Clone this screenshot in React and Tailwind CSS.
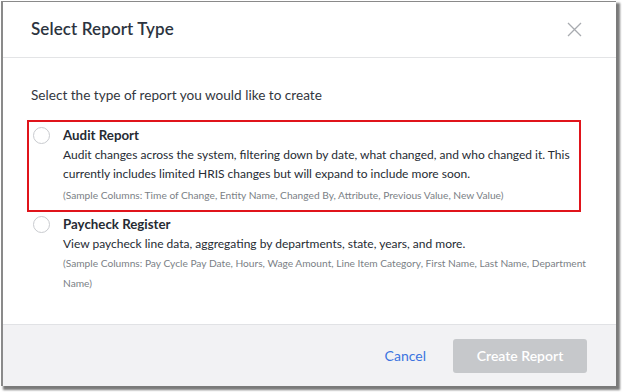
export default function App() {
  const font = { fontFamily: "Lato, 'Open Sans', sans-serif" };
  return (
    <div className="w-[622px] h-[392px] bg-white relative" style={font}>
      <div className="absolute left-[1px] top-[1px] w-[615px] h-[385px] border-l-2 border-t border-[#8a8a8a] shadow-[3px_3px_2px_1px_#7a7a7a] bg-white flex flex-col">
        {/* Header */}
        <div className="h-[56px] flex items-center justify-between pl-[28px] pr-[34px] border-b border-[#e3e4e6] shrink-0">
          <h1 className="text-[17px] font-semibold text-[#2c3440] tracking-[0.1px] -mt-[1px]">Select Report Type</h1>
          <svg width="15" height="15" viewBox="0 0 15 15" className="text-[#a8abb0]">
            <path d="M1 1 L14 14 M14 1 L1 14" stroke="currentColor" strokeWidth="1.3" fill="none" />
          </svg>
        </div>
        {/* Body */}
        <div className="flex-1 px-[24px] pt-[27px]">
          <p className="text-[13.6px] text-[#333740] leading-[20px] pl-[4px] mb-[15px]">
            Select the type of report you would like to create
          </p>
          <div className="border-2 border-[#e0141b] flex gap-[13px] pl-[4px] pr-[8px] pt-[4px] pb-[5px] w-[554px]">
            <div className="w-[17px] h-[17px] rounded-full border border-[#c9cbcf] bg-white shrink-0 mt-[1px]" />
            <div className="flex flex-col">
              <div className="text-[13.3px] font-bold text-[#262b33] leading-[19px]">Audit Report</div>
              <div className="text-[12px] text-[#262b33] leading-[19px]">
                Audit changes across the system, filtering down by date, what changed, and who changed it. This currently includes limited HRIS changes but will expand to include more soon.
              </div>
              <div className="text-[10.2px] text-[#7b7f86] leading-[20px] mt-[2px]">
                (Sample Columns: Time of Change, Entity Name, Changed By, Attribute, Previous Value, New Value)
              </div>
            </div>
          </div>
          <div className="border-2 border-transparent flex gap-[13px] pl-[4px] pt-[3px] pb-[4px] w-[566px] -mt-[2px]">
            <div className="w-[17px] h-[17px] rounded-full border border-[#c9cbcf] bg-white shrink-0 mt-[1px]" />
            <div className="flex flex-col">
              <div className="text-[13.3px] font-bold text-[#262b33] leading-[19px]">Paycheck Register</div>
              <div className="text-[12px] text-[#262b33] leading-[19px]">
                View paycheck line data, aggregating by departments, state, years, and more.
              </div>
              <div className="text-[10.2px] text-[#7b7f86] leading-[20px]">
                (Sample Columns: Pay Cycle Pay Date, Hours, Wage Amount, Line Item Category, First Name, Last Name, Department Name)
              </div>
            </div>
          </div>
        </div>
        {/* Footer */}
        <div className="h-[62px] shrink-0 bg-[#f2f2f4] border-t border-[#e1e2e5] flex items-center justify-end pr-[29px] gap-[27px]">
          <button className="text-[14px] text-[#3b74e0]">Cancel</button>
          <button className="w-[134px] h-[34px] rounded-[3px] bg-[#c6c8cb] text-white text-[14px] font-semibold">
            Create Report
          </button>
        </div>
      </div>
    </div>
  );
}
